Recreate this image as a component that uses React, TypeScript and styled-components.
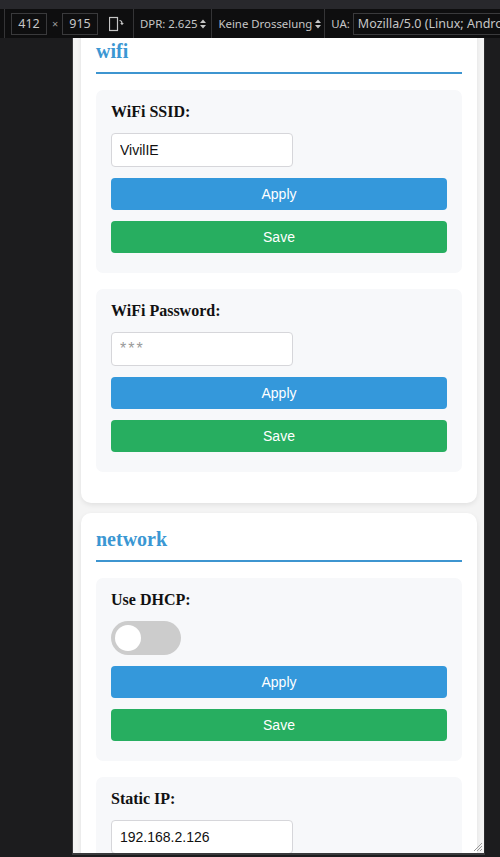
import React from "react";
import styled, { createGlobalStyle } from "styled-components";

const Global = createGlobalStyle`
  html, body { margin: 0; padding: 0; background: #1c1c1e; }
  body { width: 500px; height: 857px; overflow: hidden; }
  * { box-sizing: border-box; }
`;

const Window = styled.div`
  width: 500px;
  height: 857px;
  display: flex;
  flex-direction: column;
  background: #1c1c1e;
  overflow: hidden;
`;

const TopStrip = styled.div`
  height: 9px;
  background: #28282c;
  flex: none;
`;

const Toolbar = styled.div`
  height: 29px;
  flex: none;
  background: #0e0e0f;
  display: flex;
  align-items: center;
  padding-left: 4px;
  font-family: "Noto Sans", "Open Sans", sans-serif;
  font-size: 11.4px;
  color: #c6c6c6;
  white-space: nowrap;
  overflow: hidden;
`;

const Divider = styled.div<{ $ml?: number }>`
  width: 1px;
  align-self: stretch;
  background: #343436;
  margin-left: ${(p) => p.$ml ?? 0}px;
  flex: none;
`;

const DimBox = styled.div<{ $ml: number }>`
  width: 36px;
  height: 22px;
  margin-left: ${(p) => p.$ml}px;
  border: 1px solid #3a3a3c;
  display: flex;
  align-items: center;
  justify-content: center;
  font-size: 12.5px;
  flex: none;
`;

const Times = styled.span`
  margin: 0 0 0 5px;
  width: 10px;
  font-size: 11px;
  color: #9a9a9a;
  flex: none;
`;

const IconSlot = styled.div<{ $ml: number }>`
  margin-left: ${(p) => p.$ml}px;
  display: flex;
  align-items: center;
  flex: none;
`;

const ToolText = styled.span<{ $ml: number }>`
  margin-left: ${(p) => p.$ml}px;
  display: inline-flex;
  align-items: center;
  gap: 3px;
  flex: none;
`;

const UaBox = styled.div`
  margin-left: 3px;
  height: 22px;
  width: 170px;
  border: 1px solid #3a3a3c;
  padding-left: 4px;
  display: flex;
  align-items: center;
  font-size: 12.5px;
  flex: none;
`;

const Stage = styled.div`
  flex: 1;
  display: flex;
  flex-direction: column;
  padding-left: 72px;
`;

const Viewport = styled.div`
  width: 413px;
  height: 815px;
  background: #f4f4f4;
  border-left: 1px solid #3a3a3c;
  border-right: 1px solid #2c2c2e;
  overflow: hidden;
  position: relative;
`;

const BottomLine = styled.div`
  width: 413px;
  height: 2px;
  background: #3a3a3c;
`;

const Page = styled.div`
  margin-top: -13px;
  padding: 0 7px 0 8px;
  display: flex;
  flex-direction: column;
  gap: 10px;
`;

const Card = styled.div`
  background: #ffffff;
  border-radius: 10px;
  box-shadow: 0 2px 5px rgba(0, 0, 0, 0.08);
  padding: 15px;
`;

const Heading = styled.h2`
  margin: 0 0 16px;
  font-family: "Liberation Serif", "Times New Roman", serif;
  font-weight: bold;
  font-size: 20px;
  line-height: 23px;
  color: #3b97d3;
  padding-bottom: 9px;
  border-bottom: 2px solid #3d95d0;
`;

const Section = styled.div`
  background: #f7f8fa;
  border-radius: 7px;
  padding: 13px 15px 20px;
  margin-bottom: 16px;
  display: flex;
  flex-direction: column;
  align-items: flex-start;
`;

const Label = styled.label`
  display: block;
  font-family: "Liberation Serif", "Times New Roman", serif;
  font-weight: bold;
  font-size: 16px;
  line-height: 18px;
  color: #111;
  margin-bottom: 12px;
`;

const TextInput = styled.input`
  width: 182px;
  height: 34px;
  border: 1px solid #d6d6da;
  border-radius: 4px;
  background: #fff;
  padding: 0 8px;
  font-family: "Liberation Sans", Arial, sans-serif;
  font-size: 14px;
  color: #111;
  outline: none;
  &::placeholder { color: #9a9a9a; letter-spacing: 2px; font-size: 16px; }
`;

const Button = styled.button<{ $variant: "apply" | "save" }>`
  width: 100%;
  height: 32px;
  margin-top: 11px;
  border: none;
  border-radius: 4px;
  background: ${(p) => (p.$variant === "apply" ? "#3498db" : "#27ae60")};
  color: #fff;
  font-family: "Liberation Sans", Arial, sans-serif;
  font-size: 14px;
  cursor: pointer;
`;

const Switch = styled.div`
  width: 70px;
  height: 34px;
  border-radius: 17px;
  background: #cccccc;
  display: flex;
  align-items: center;
  padding-left: 4px;
`;

const Knob = styled.div`
  width: 26px;
  height: 26px;
  border-radius: 50%;
  background: #fff;
`;

const ResizeHandle = styled.svg`
  position: absolute;
  right: 1px;
  bottom: 1px;
`;

const UpDown = () => (
  <svg width="6" height="10" viewBox="0 0 6 10">
    <path d="M0 4 L3 0.5 L6 4 Z M0 6 L3 9.5 L6 6 Z" fill="#c6c6c6" />
  </svg>
);

type SectionProps = { label: string; children: React.ReactNode };

const FieldSection = ({ label, children }: SectionProps) => (
  <Section>
    <Label>{label}</Label>
    {children}
    <Button $variant="apply">Apply</Button>
    <Button $variant="save">Save</Button>
  </Section>
);

export default function App() {
  return (
    <>
      <Global />
      <Window>
        <TopStrip />
        <Toolbar>
          <Divider />
          <DimBox $ml={6}>412</DimBox>
          <Times>×</Times>
          <DimBox $ml={0}>915</DimBox>
          <IconSlot $ml={11}>
            <svg width="15" height="16" viewBox="0 0 15 16">
              <rect x="0.5" y="1.5" width="8" height="13" fill="none" stroke="#c6c6c6" strokeWidth="1.2" />
              <path d="M10.5 4.5 Q13 4.5 13 7.5" fill="none" stroke="#c6c6c6" strokeWidth="1.2" />
              <path d="M11.2 7 L13 9.2 L14.8 7 Z" fill="#c6c6c6" />
            </svg>
          </IconSlot>
          <Divider $ml={9} />
          <ToolText $ml={6}>
            DPR: 2.625 <UpDown />
          </ToolText>
          <Divider $ml={5} />
          <ToolText $ml={6}>
            Keine Drosselung <UpDown />
          </ToolText>
          <Divider $ml={3} />
          <ToolText $ml={6}>UA:</ToolText>
          <UaBox>Mozilla/5.0 (Linux; Android 10; K)</UaBox>
        </Toolbar>
        <Stage>
          <Viewport>
            <Page>
              <Card>
                <Heading>wifi</Heading>
                <FieldSection label="WiFi SSID:">
                  <TextInput defaultValue="VivilIE" />
                </FieldSection>
                <FieldSection label="WiFi Password:">
                  <TextInput type="password" placeholder="***" />
                </FieldSection>
              </Card>
              <Card>
                <Heading>network</Heading>
                <FieldSection label="Use DHCP:">
                  <Switch>
                    <Knob />
                  </Switch>
                </FieldSection>
                <FieldSection label="Static IP:">
                  <TextInput defaultValue="192.168.2.126" />
                </FieldSection>
              </Card>
            </Page>
            <ResizeHandle width="12" height="12" viewBox="0 0 12 12">
              <path d="M11 3 L3 11 M11 6 L6 11 M11 9 L9 11" stroke="#9a9a9a" strokeWidth="1" />
            </ResizeHandle>
          </Viewport>
          <BottomLine />
        </Stage>
      </Window>
    </>
  );
}
